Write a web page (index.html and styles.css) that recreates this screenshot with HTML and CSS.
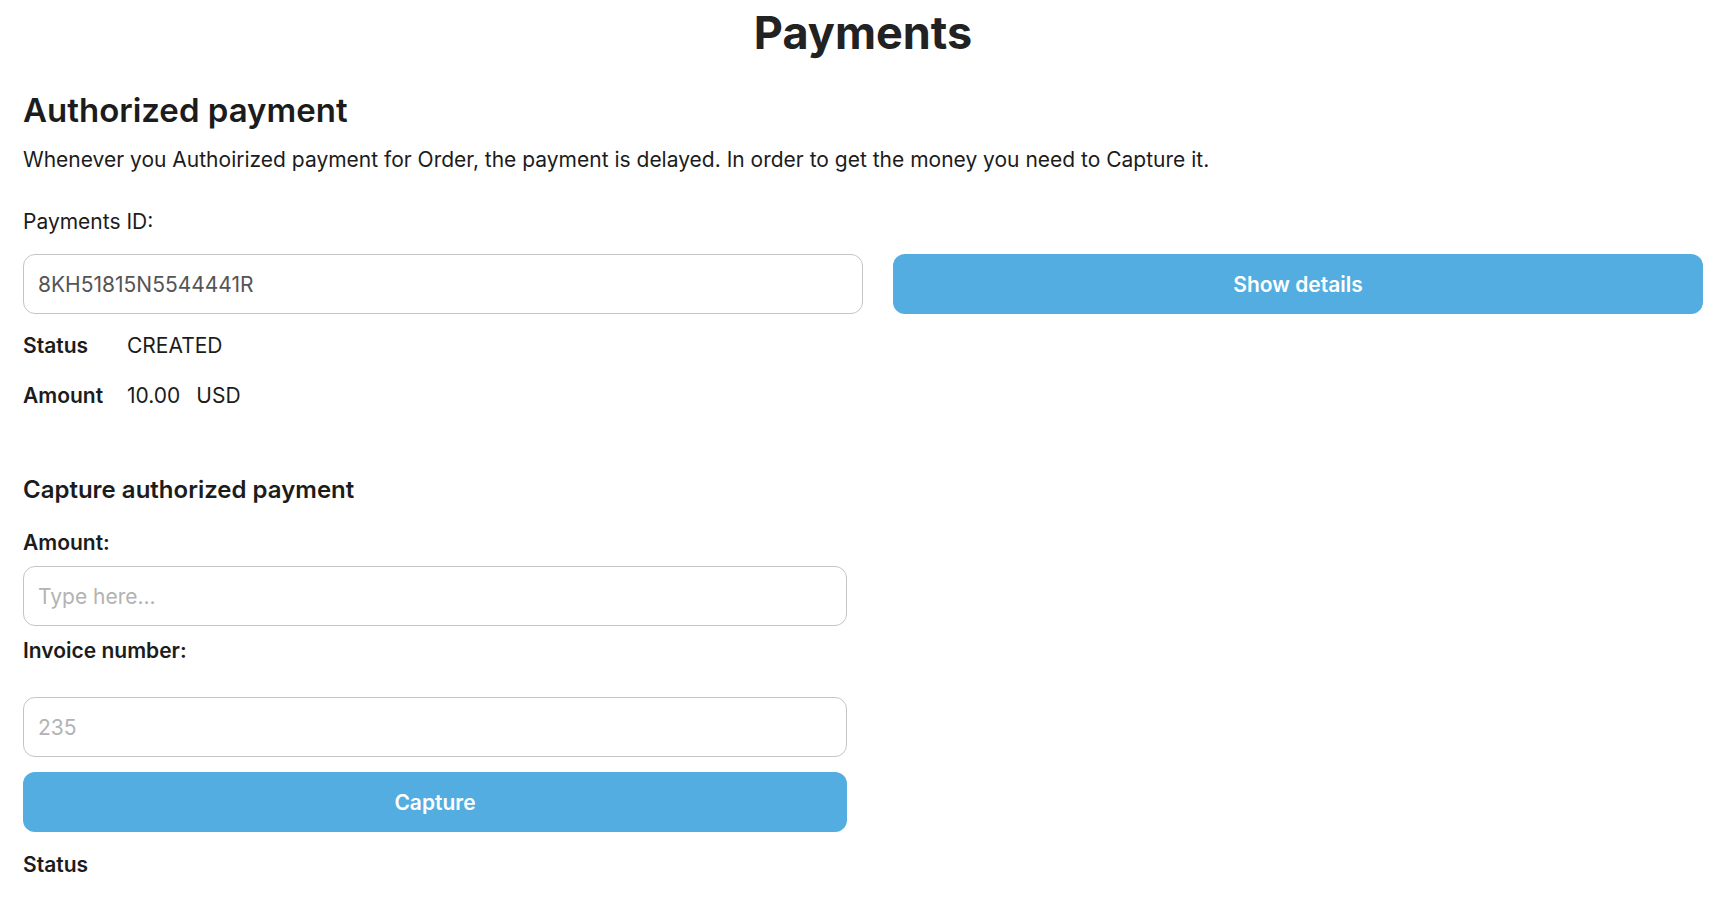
FILE: index.html
```html
<!DOCTYPE html>
<html lang="en">
<head>
  <meta charset="UTF-8" />
  <title>Payments</title>
  <link rel="stylesheet" href="styles.css">
</head>
<body>
  <h1 class="page-title">Payments</h1>

  <section class="authorized">
    <h2>Authorized payment</h2>
    <p class="lead">Whenever you Authoirized payment for Order, the payment is delayed. In order to get the money you need to Capture it.</p>

    <label class="id-label" for="paymentId">Payments ID:</label>
    <div class="lookup">
      <input id="paymentId" class="text-input" type="text" value="8KH51815N5544441R">
      <button class="btn">Show details</button>
    </div>

    <dl class="details">
      <dt>Status</dt>
      <dd>CREATED</dd>
      <dt>Amount</dt>
      <dd>10.00<span class="currency">USD</span></dd>
    </dl>
  </section>

  <section class="capture">
    <h3>Capture authorized payment</h3>

    <label class="field-label" for="amount">Amount:</label>
    <input id="amount" class="text-input" type="text" placeholder="Type here...">

    <label class="field-label invoice-label" for="invoice">Invoice number:</label>
    <input id="invoice" class="text-input" type="text" placeholder="235">

    <button class="btn capture-btn">Capture</button>

    <div class="result-label">Status</div>
  </section>
</body>
</html>
```

FILE: styles.css
```css
body {
  margin: 0;
  padding: 0 16px 0 23px;
  background: #fff;
  color: #1c1c1c;
  font-family: Inter, 'Noto Sans', sans-serif;
  font-size: 21px;
  line-height: 24px;
}

.page-title {
  margin: 6px 0 0;
  font-size: 45px;
  line-height: 54px;
  font-weight: 700;
  text-align: center;
  color: #222;
}

h2 {
  margin: 30px 0 0;
  font-size: 33px;
  line-height: 40px;
  font-weight: 600;
}

.lead {
  margin: 18px 0 0;
}

.id-label {
  display: block;
  margin-top: 38px;
}

.lookup {
  display: grid;
  grid-template-columns: 840px 1fr;
  gap: 30px;
  margin-top: 20px;
}

.text-input {
  box-sizing: border-box;
  width: 100%;
  height: 60px;
  padding: 0 14px;
  border: 1px solid #c4c4c4;
  border-radius: 12px;
  font-family: inherit;
  font-size: 21px;
  color: #555;
  background: #fff;
  outline: none;
}

.text-input::placeholder {
  color: #b3b3b3;
}

.btn {
  height: 60px;
  border: none;
  border-radius: 12px;
  background: #53ade0;
  color: #fff;
  font-family: inherit;
  font-size: 21px;
  font-weight: 600;
  cursor: pointer;
}

.details {
  display: grid;
  grid-template-columns: 104px auto;
  row-gap: 26px;
  margin: 20px 0 0;
}

.details dt {
  font-weight: 600;
}

.details dd {
  margin: 0;
}

.currency {
  margin-left: 16px;
}

.capture {
  width: 824px;
  margin-top: 67px;
}

h3 {
  margin: 0;
  font-size: 24px;
  line-height: 29px;
  font-weight: 600;
}

.field-label {
  display: block;
  margin: 27px 0 11px;
  font-weight: 600;
}

.invoice-label {
  margin: 13px 0 34px;
}

.capture-btn {
  display: block;
  width: 100%;
  margin-top: 15px;
}

.result-label {
  margin-top: 21px;
  font-weight: 600;
}
```
